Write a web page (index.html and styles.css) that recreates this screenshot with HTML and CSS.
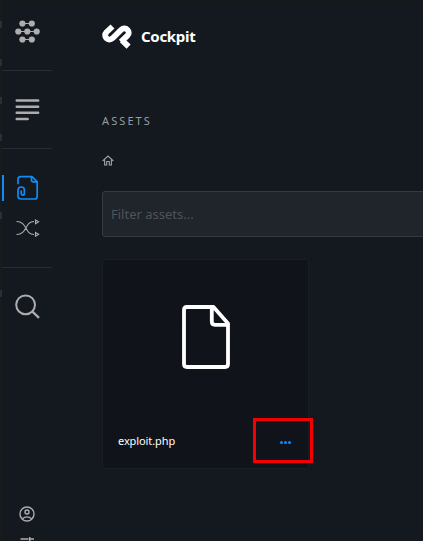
FILE: index.html
```html
<!DOCTYPE html>
<html lang="en">
<head>
<meta charset="utf-8">
<title>Assets - Cockpit</title>
<link rel="stylesheet" href="styles.css">
</head>
<body>
<div class="app">
  <div class="edge"><i class="m1"></i><i class="m2"></i><i class="m3"></i><i class="m4"></i><i class="m5"></i><i class="m6"></i></div>
  <nav class="sidebar">
    <a class="group menu">
      <svg width="26" height="24" viewBox="0 0 26 24" fill="#adadb0" stroke="#adadb0" stroke-width="1.2"><path d="M8 4.5h10M4 12.5h18M8 20.5h10"/><g stroke="none"><circle cx="8.4" cy="4.5" r="3.1"/><circle cx="17.8" cy="4.5" r="3.1"/><circle cx="4.3" cy="12.5" r="3.1"/><circle cx="13.3" cy="12.5" r="3.1"/><circle cx="22.7" cy="12.5" r="3.1"/><circle cx="8.4" cy="20.5" r="3.1"/><circle cx="17.8" cy="20.5" r="3.1"/></g></svg>
    </a>
    <a class="group content">
      <svg width="26" height="24" viewBox="0 0 26 24" stroke="#adadb0" stroke-width="2.4" stroke-linecap="round"><path d="M2.7 2.5h21.5M2.7 8.7h21.5M2.7 14.8h21.5M2.7 21h11"/></svg>
    </a>
    <div class="group tools">
      <a class="active">
        <svg width="26" height="26" viewBox="0 0 26 26" fill="none" stroke="#128bf5" stroke-width="1.7" stroke-linecap="round" stroke-linejoin="round"><path d="M4 8.5V4.2Q4 1.7 6.5 1.7H18L23.2 6.8V21.2Q23.2 24 20.6 24H7.7Q4 24 4 21V15.5Q4 12 7.2 12Q10.4 12 10.4 15.3V18Q10.4 20.2 8.8 20.2Q7.3 20.2 7.3 18V16"/><path d="M17.5 1.7V4.9Q17.5 6.8 19.3 6.8H23.2"/></svg>
      </a>
      <a class="shuffle">
        <svg width="26" height="18" viewBox="0 0 26 18" fill="none" stroke="#adadb0" stroke-width="1.1"><path d="M2.5 2.5C13.5 2.5 10.5 15.5 20 15.5M2.5 15.5C13.5 15.5 10.5 2.5 20 2.5M21.5 1L24.6 2.8L21.5 4.7ZM21.5 13.5L24.6 15.3L21.5 17.2Z"/></svg>
      </a>
    </div>
    <a class="search">
      <svg width="28" height="28" viewBox="0 0 28 28" fill="none" stroke="#adadb0" stroke-width="2"><circle cx="12.6" cy="10.8" r="9.4"/><path d="M19.2 17.4L26 23.9" stroke-width="2.3"/></svg>
    </a>
    <div class="bottom">
      <svg width="16" height="16" viewBox="0 0 16 16" fill="none" stroke="#adadb0" stroke-width="1.4"><circle cx="8" cy="8" r="7"/><circle cx="8" cy="6" r="2"/><path d="M3.3 12.7Q8 9 12.7 12.7"/></svg>
      <svg class="sliders" width="16" height="14" viewBox="0 0 16 14" fill="none" stroke="#adadb0" stroke-width="1.5"><path d="M1.5 3h8M10.7 1v4M10.7 3h4.3M1 8h3M5 6v4M8 8h7M1 12h14"/></svg>
    </div>
  </nav>
  <main>
    <header>
      <svg width="32" height="26" viewBox="0 0 32 26" fill="none" stroke="#fff" stroke-width="5.8" stroke-linejoin="round"><path d="M11.5 3.5L5.6 9C1.4 13.4 7.2 19.2 11.6 15.2L20.2 6.8C24.4 2.7 30.5 8.8 26.4 12.7L19.9 18.8M20.9 17.2L27.6 23.6"/></svg>
      <b>Cockpit</b>
    </header>
    <h1>ASSETS</h1>
    <svg class="home" width="12" height="11" viewBox="0 0 12 11" fill="none" stroke="#9fa1a5" stroke-width="1.1"><path d="M.6 6L6 1L11.4 6M2.6 4.8V10H4.7V6.5H7.3V10H9.4V4.8"/></svg>
    <div class="filter">Filter assets...</div>
    <article class="card">
      <div class="preview">
        <svg width="52" height="66" viewBox="0 0 52 66" fill="none" stroke="#fff" stroke-width="3.8" stroke-linejoin="round"><path d="M33.5 3H7Q4 3 4 6V60Q4 63 7 63H45Q48 63 48 60V19.5ZM31.8 3V17.5Q31.8 20.8 35 20.8H48"/></svg>
      </div>
      <footer><span class="name">exploit.php</span><span class="more"><i></i><i></i><i></i></span></footer>
      <div class="highlight"></div>
    </article>
  </main>
</div>
</body>
</html>
```
FILE: styles.css
```css
* { box-sizing: border-box; }
body { margin: 0; background: #14181f; color: #fff; font-family: "Noto Sans", sans-serif; overflow: hidden; }
svg { display: block; flex: none; }
.app { display: flex; height: 541px; width: 423px; border-top: 1px solid #17191b; overflow: hidden; }
.edge { width: 2px; background: #191b1b; flex: none; display: flex; flex-direction: column; }
.edge i { width: 2px; height: 7px; background: #2b2e33; flex: none; }
.m1 { margin-top: 20px; }
.m2 { margin-top: 31px; }
.m3 { margin-top: 31px; }
.m4 { margin-top: 30px; }
.m5 { margin-top: 71px; }
.m6 { margin-top: 71px; }
.sidebar { width: 50px; flex: none; display: flex; flex-direction: column; }
.group { display: flex; flex-direction: column; align-items: center; border-bottom: 1px solid #292c33; }
.menu { height: 70px; padding-top: 18px; }
.content { height: 78px; padding-top: 27px; }
.tools { height: 119px; padding-top: 26px; align-items: stretch; }
.active { height: 26px; border-left: 2px solid #128bf5; padding-left: 10px; }
.shuffle { padding: 18px 0 0 12px; }
.search { padding: 26px 0 0 11px; }
.bottom { margin-top: auto; height: 35px; padding-left: 17px; overflow: hidden; }
.sliders { margin-top: 14px; }
main { padding-left: 50px; flex: 1; min-width: 0; }
header { display: flex; align-items: center; height: 26px; margin-top: 22px; }
header svg { margin-left: -1px; }
header b { font-size: 15px; line-height: 26px; margin-left: 8px; letter-spacing: -.3px; }
h1 { margin: 64px 0 0; height: 16px; font-size: 11px; line-height: 16px; font-weight: 400; letter-spacing: 2.1px; color: #9a9c9f; }
.home { margin-top: 26px; }
.filter { margin-top: 25px; width: 340px; height: 46px; border: 1px solid #363a41; border-radius: 3px; background: #20242b; color: #4f5359; padding-left: 8px; font-size: 13px; line-height: 44px; }
.card { position: relative; margin-top: 22px; width: 207px; height: 210px; border: 1px solid #1b1d24; border-radius: 3px; background: #101319; }
.preview { height: 154px; display: flex; justify-content: center; align-items: center; }
footer { height: 54px; padding: 0 17px 0 15px; display: flex; justify-content: space-between; align-items: center; }
.name { font-size: 11px; letter-spacing: -.1px; position: relative; top: -1px; }
.more { display: flex; gap: 1px; margin-top: 2px; }
.more i { width: 3px; height: 3px; border-radius: 50%; background: #128bf5; }
.highlight { position: absolute; left: 150px; top: 158px; width: 60px; height: 45px; border: 3px solid #f50000; }
```
